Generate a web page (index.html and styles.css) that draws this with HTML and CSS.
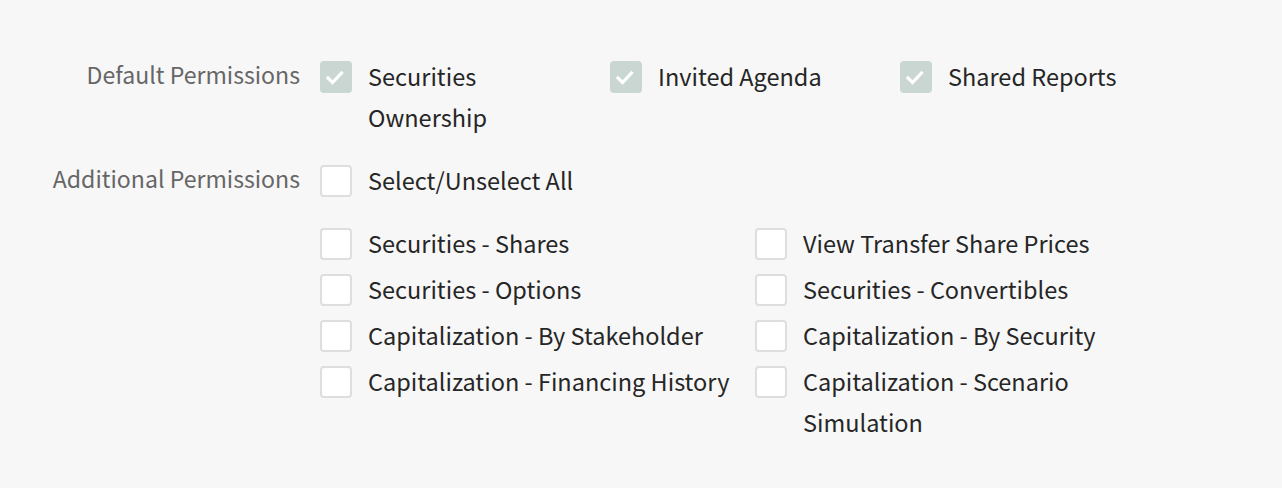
FILE: index.html
```html
<!DOCTYPE html>
<html>
<head>
<meta charset="utf-8">
<link rel="stylesheet" href="styles.css">
</head>
<body>
<div class="form">
  <div class="row">
    <div class="label">Default Permissions</div>
    <div class="field default-grid">
      <div class="check checked"><span class="box"><svg viewBox="0 0 32 32" width="32" height="32"><path d="M8 17 L12.5 21.5 L21.5 12" fill="none" stroke="#fff" stroke-width="3.2" stroke-linecap="square"/></svg></span><span class="text narrow">Securities Ownership</span></div>
      <div class="check checked"><span class="box"><svg viewBox="0 0 32 32" width="32" height="32"><path d="M8 17 L12.5 21.5 L21.5 12" fill="none" stroke="#fff" stroke-width="3.2" stroke-linecap="square"/></svg></span><span class="text">Invited Agenda</span></div>
      <div class="check checked"><span class="box"><svg viewBox="0 0 32 32" width="32" height="32"><path d="M8 17 L12.5 21.5 L21.5 12" fill="none" stroke="#fff" stroke-width="3.2" stroke-linecap="square"/></svg></span><span class="text">Shared Reports</span></div>
    </div>
  </div>
  <div class="row second">
    <div class="label">Additional Permissions</div>
    <div class="field">
      <div class="check"><span class="box"></span><span class="text">Select/Unselect All</span></div>
      <div class="grid2">
        <div class="check"><span class="box"></span><span class="text">Securities - Shares</span></div>
        <div class="check"><span class="box"></span><span class="text">View Transfer Share Prices</span></div>
        <div class="check"><span class="box"></span><span class="text">Securities - Options</span></div>
        <div class="check"><span class="box"></span><span class="text">Securities - Convertibles</span></div>
        <div class="check"><span class="box"></span><span class="text">Capitalization - By Stakeholder</span></div>
        <div class="check"><span class="box"></span><span class="text">Capitalization - By Security</span></div>
        <div class="check"><span class="box"></span><span class="text">Capitalization - Financing History</span></div>
        <div class="check"><span class="box"></span><span class="text narrow2">Capitalization - Scenario Simulation</span></div>
      </div>
    </div>
  </div>
</div>
</body>
</html>
```
FILE: styles.css
```css
html, body {
  margin: 0;
  padding: 0;
  background: #f7f7f7;
}
body {
  font-family: "Noto Sans CJK KR", "Noto Sans", sans-serif;
  font-size: 23.5px;
  color: #262626;
}
.form {
  padding-top: 56px;
}
.row {
  display: flex;
  align-items: flex-start;
}
.row.second {
  margin-top: 22px;
}
.label {
  width: 300px;
  flex: none;
  text-align: right;
  color: #666;
  font-size: 23.1px;
  line-height: 37px;
  padding-right: 20px;
  box-sizing: content-box;
}
.field {
  flex: none;
}
.default-grid {
  display: grid;
  grid-template-columns: 290px 290px 290px;
}
.check {
  display: flex;
  align-items: flex-start;
  line-height: 41px;
}
.box {
  flex: none;
  width: 32px;
  height: 32px;
  margin-top: 4.5px;
  margin-right: 16px;
  box-sizing: border-box;
  border: 2px solid #dedede;
  border-radius: 4px;
  background: #fff;
}
.checked .box {
  border: none;
  background: #c9d6d1;
}
.box svg {
  display: block;
}
.text.narrow {
  max-width: 200px;
}
.text.narrow2 {
  max-width: 300px;
}
.grid2 {
  margin-top: 22px;
  display: grid;
  grid-template-columns: 435px 400px;
  row-gap: 5px;
}
```
